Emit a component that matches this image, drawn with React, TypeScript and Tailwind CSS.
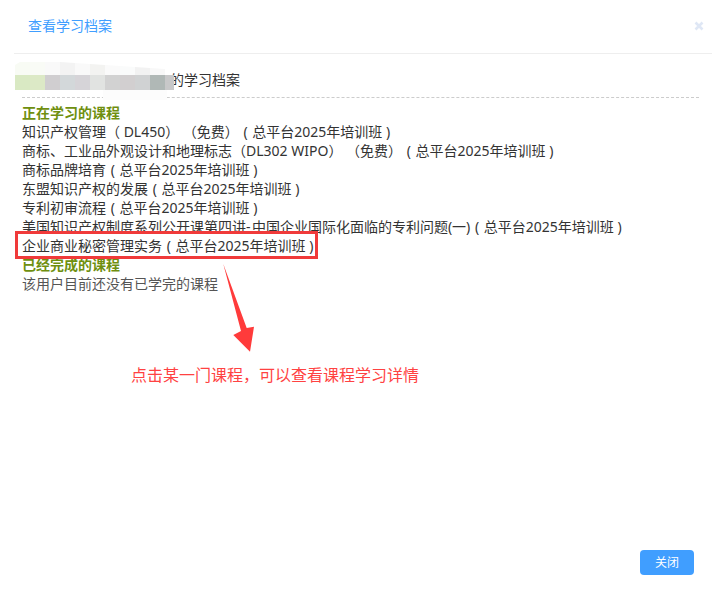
const courses = [
  "知识产权管理（ DL450） （免费） ",
  "商标、工业品外观设计和地理标志（DL302 WIPO） （免费） ",
  "商标品牌培育 ",
  "东盟知识产权的发展 ",
  "专利初审流程 ",
  "美国知识产权制度系列公开课第四讲-\u200a中国企业国际化面临的专利问题(一) ",
  "企业商业秘密管理实务 ",
];

const topCells = ["#f8fbf4", "#f9fbf6", "#f9f9f9", "#f3f3f3", "#f9f9f9", "#f3f3f1", "#fafafa", "#fafbfb", "#f2f2f2", "#f8f8f8"];
const bottomCells = ["#d9e9c3", "#dce9c6", "#d0ced0", "#d3d8da", "#d6d4d8", "#e1e3e1", "#d2d2d2", "#d2cfd0", "#d0d2d3", "#b0b8b6"];

export default function App() {
  return (
    <div className="relative w-[712px] h-[592px] overflow-hidden bg-white text-[14px] text-[#333] font-['Noto_Sans','Noto_Sans_CJK_SC',sans-serif]">
      <header className="ml-[14px] h-[54px] border-b border-[#eeeeee] pl-[14px] pr-[8px] pb-[2px] flex items-center justify-between">
        <h1 className="text-[14px] font-normal text-[#409eff]">查看学习档案</h1>
        <svg width="10" height="10" viewBox="0 0 10 10" aria-hidden="true">
          <path d="M1.5 1.5 8.5 8.5M8.5 1.5 1.5 8.5" stroke="#dfe7f5" strokeWidth="2.6" />
        </svg>
      </header>

      <section className="mt-[8px] ml-[15px] flex items-end h-[28px]">
        <div className="relative z-10 flex flex-col w-[159px]">
          <div className="flex h-[13px] w-[150px] [clip-path:polygon(0_3px,5px_0,45px_0,150px_7px,150px_13px,0_13px)]">
            {topCells.map((c, i) => (
              <span key={i} className="w-[15px] shrink-0" style={{ backgroundColor: c }} />
            ))}
          </div>
          <div className="flex h-[15px]">
            {bottomCells.map((c, i) => (
              <span key={i} className="w-[15px] shrink-0" style={{ backgroundColor: c }} />
            ))}
            <span className="w-[9px] shrink-0 bg-[#c8c8c9]" />
          </div>
        </div>
        <span className="-ml-[4px] mb-[1px] leading-[19px] text-[#333]">的学习档案</span>
      </section>

      <main className="ml-[22px] mr-[13px] mt-[7px] border-t border-dashed border-[#cccccc] pt-[5px] leading-[19px]">
        <h2 className="font-bold text-[#6f8f0f]">正在学习的课程</h2>
        <ul>
          {courses.map((c) => (
            <li key={c} className="whitespace-pre">
              {c}
              <span className="mx-[1px]">(</span> 总平台2025年培训班 )
            </li>
          ))}
        </ul>
        <h2 className="font-bold text-[#6f8f0f]">已经完成的课程</h2>
        <p className="text-[#555]">该用户目前还没有已学完的课程</p>
      </main>

      <div className="absolute left-[103px] top-[90px] w-[64px] h-[10px] bg-[#fcfcfc]" />
      <div className="absolute left-[15px] top-[231px] w-[303px] h-[28px] border-[3px] border-[#f03a3a]" />
      <svg className="absolute left-[220px] top-[262px]" width="40" height="92" viewBox="220 262 40 92" aria-hidden="true">
        <path d="M223.3 264 246.7 328 254 326.7 250 351.7 233.3 335 241 331Z" fill="#ff3b3b" />
      </svg>
      <p className="absolute left-[131px] top-[364px] text-[16px] leading-[22px] text-[#ff4242]">点击某一门课程，可以查看课程学习详情</p>

      <button className="absolute left-[640px] top-[550px] w-[54px] h-[25px] rounded-[4px] bg-[#409eff] text-white text-[12px]">关闭</button>
    </div>
  );
}
